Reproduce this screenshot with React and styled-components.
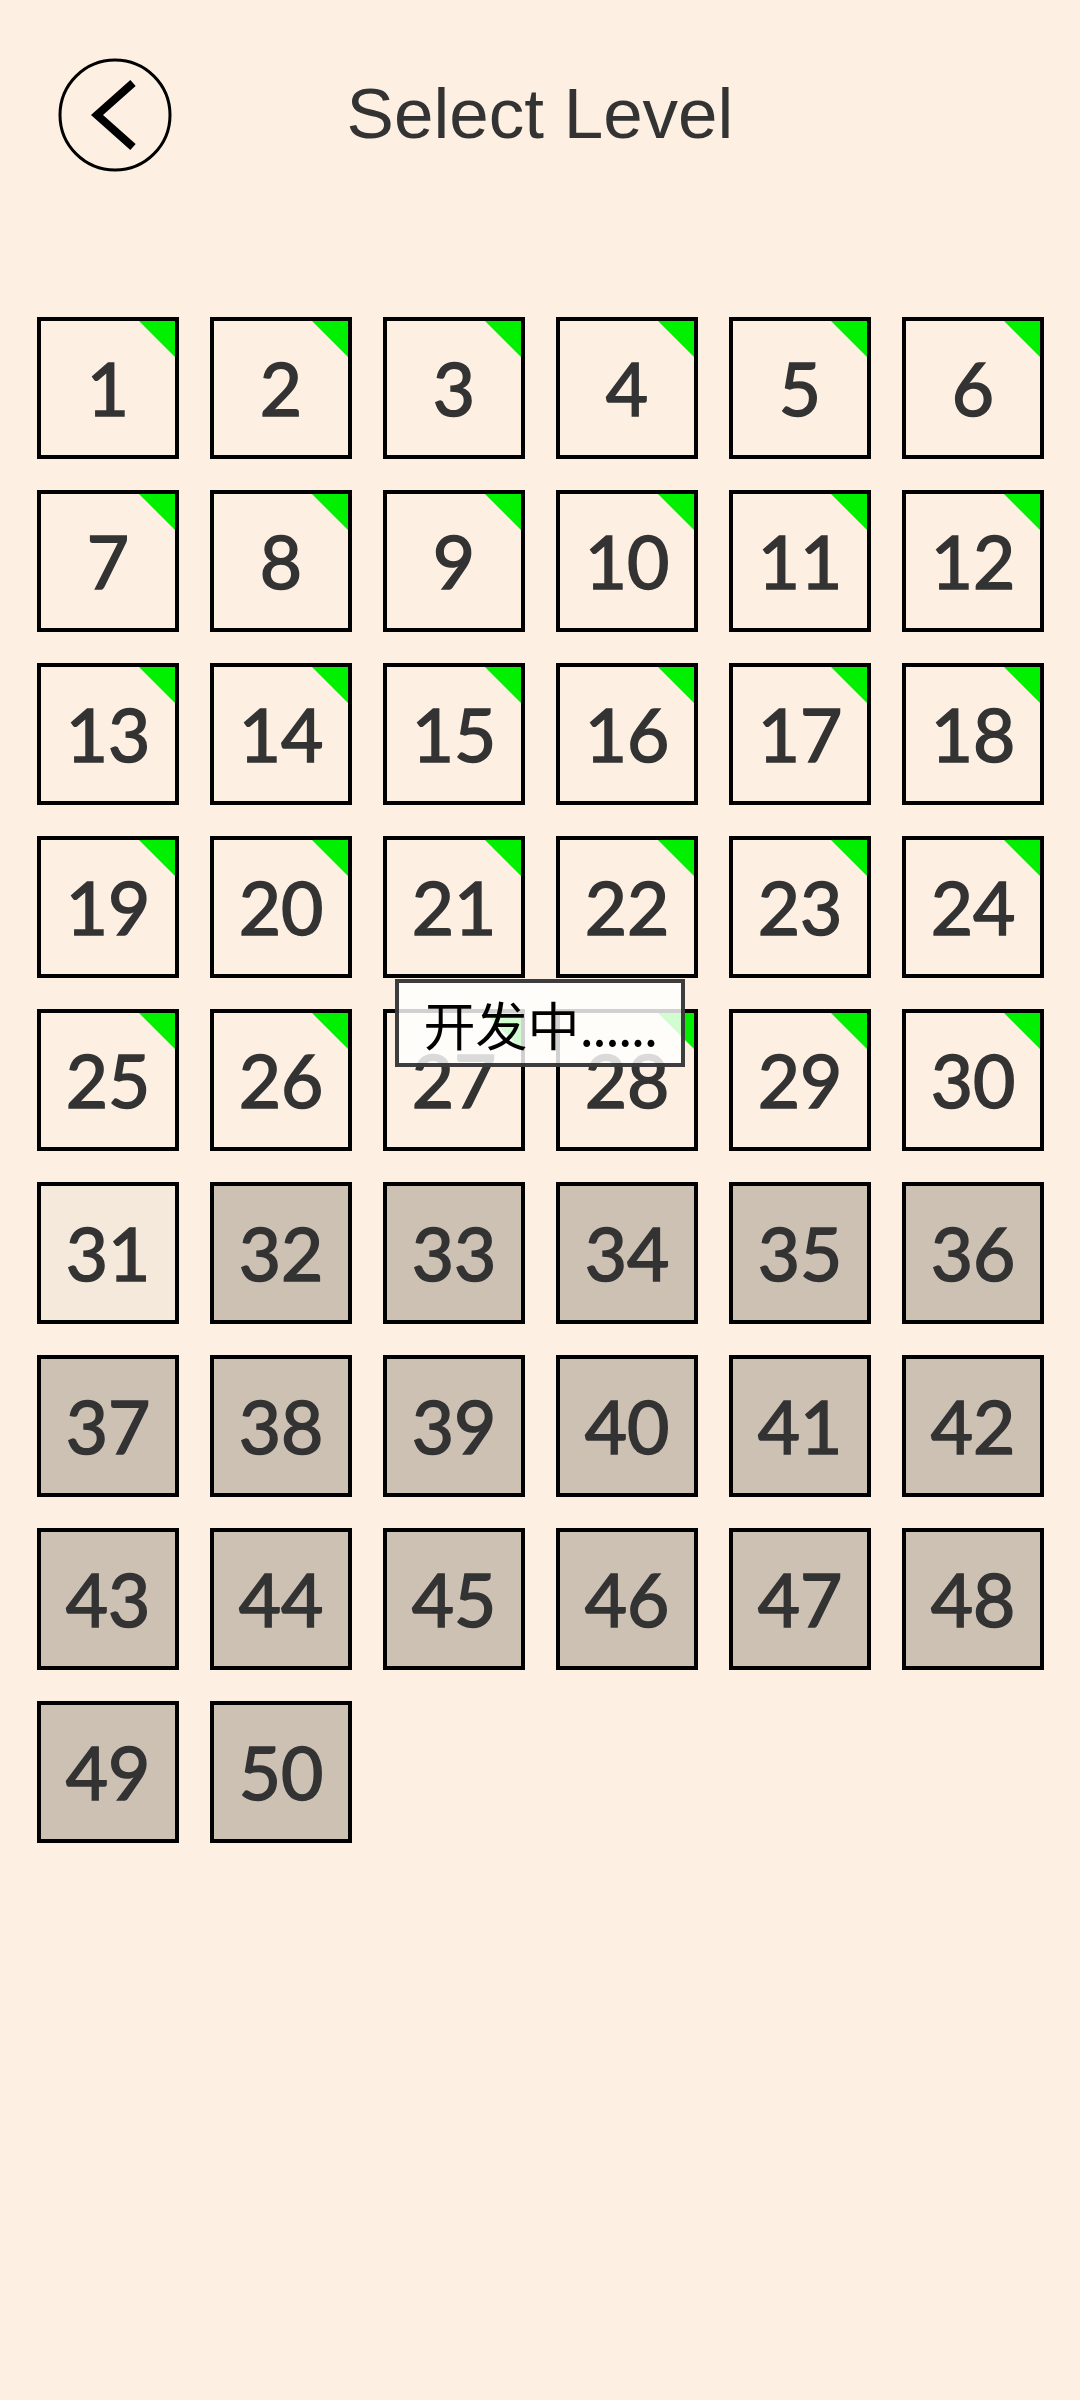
import React from "react";
import styled, { createGlobalStyle } from "styled-components";

const GlobalStyle = createGlobalStyle`
    html, body {
        margin: 0;
        padding: 0;
        background: #fdf0e2;
    }
    body {
        font-family: "Liberation Sans", Arial, sans-serif;
    }
`;

const Page = styled.div`
    position: relative;
    min-height: 2400px;
    background: #fdf0e2;
`;

const Header = styled.header`
    display: grid;
    grid-template-columns: 1fr auto 1fr;
    align-items: center;
    padding: 58px 58px 0 58px;
    height: 113px;
`;

const BackButton = styled.button`
    width: 114px;
    height: 114px;
    padding: 0;
    border: none;
    background: transparent;
    cursor: pointer;
    justify-self: start;
    svg {
        display: block;
    }
`;

const Title = styled.h1`
    margin: 0 0 4px;
    font-family: "Liberation Sans", Arial, sans-serif;
    font-weight: 400;
    font-size: 71px;
    color: #333;
`;

const Grid = styled.div`
    display: grid;
    grid-template-columns: repeat(6, 142px);
    grid-auto-rows: 142px;
    gap: 31px;
    padding: 146px 0 0 37px;
`;

const tileBg = {
    done: "#fdf0e2",
    current: "#f5e9dc",
    locked: "#cdc1b4",
};

const Tile = styled.div`
    position: relative;
    box-sizing: border-box;
    border: 4px solid #000;
    background: ${p => tileBg[p.$state]};
    display: flex;
    align-items: center;
    justify-content: center;
    font-family: Lato, "Liberation Sans", sans-serif;
    font-weight: 400;
    font-size: 73px;
    color: #333;
    -webkit-text-stroke: 1.6px #333;
    &:after {
        content: "";
        display: ${p => (p.$state === "done" ? "block" : "none")};
        position: absolute;
        top: 0;
        right: 0;
        width: 0;
        height: 0;
        border-style: solid;
        border-width: 0 36px 36px 0;
        border-color: transparent #00f000 transparent transparent;
    }
`;

const Toast = styled.div`
    position: absolute;
    top: 979px;
    left: 50%;
    transform: translateX(-50%);
    box-sizing: border-box;
    width: 290px;
    height: 88px;
    border: 4px solid rgba(40, 40, 40, 0.9);
    background: rgba(255, 255, 255, 0.82);
    display: flex;
    align-items: center;
    justify-content: center;
    font-family: "Noto Sans CJK SC", "Noto Sans", sans-serif;
    font-size: 52px;
    color: #000;
    white-space: nowrap;
`;

const Dots = styled.span`
    letter-spacing: -1.6px;
`;

function BackIcon() {
    return (
        <svg width="114" height="114" viewBox="0 0 114 114">
            <circle cx="57" cy="57" r="55" fill="none" stroke="#000" strokeWidth="3" />
            <polyline
                points="75,25 39,57 75,89"
                fill="none"
                stroke="#000"
                strokeWidth="8"
                strokeLinejoin="miter"
            />
        </svg>
    );
}

const levels = Array.from({ length: 50 }, (_, i) => i + 1);

function stateOf(n) {
    if (n <= 30) return "done";
    if (n === 31) return "current";
    return "locked";
}

export default function App() {
    return (
        <Page>
            <GlobalStyle />
            <Header>
                <BackButton aria-label="back">
                    <BackIcon />
                </BackButton>
                <Title>Select Level</Title>
                <span />
            </Header>
            <Grid>
                {levels.map(n => (
                    <Tile key={n} $state={stateOf(n)}>{n}</Tile>
                ))}
            </Grid>
            <Toast>开发中<Dots>......</Dots></Toast>
        </Page>
    );
}
